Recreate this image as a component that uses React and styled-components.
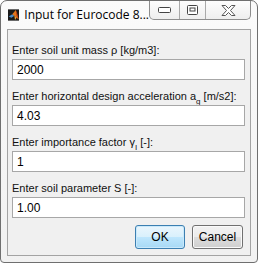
import React from 'react'
import styled, { createGlobalStyle } from 'styled-components'

const Global = createGlobalStyle`
  html, body { margin: 0; padding: 0; background: #ffffff; }
  * { box-sizing: border-box; }
`

const Window = styled.div`
  width: 258px;
  height: 263px;
  border: 1px solid #6f6f6f;
  border-radius: 7px 7px 4px 4px;
  background: linear-gradient(#fbfbfb, #f1f1f1);
  display: flex;
  flex-direction: column;
  overflow: hidden;
`

const TitleBar = styled.div`
  height: 28px;
  display: flex;
  align-items: flex-start;
  padding: 0 6px 0 7px;
`

const Title = styled.div`
  flex: 1;
  display: flex;
  align-items: center;
  gap: 5px;
  height: 27px;
  font-family: 'Open Sans', 'Noto Sans', sans-serif;
  font-size: 12px;
  color: #000;
  white-space: nowrap;
  overflow: hidden;
`

const Caption = styled.div`
  display: flex;
  height: 19px;
  border: 1px solid #8d8d8d;
  border-top: none;
  border-radius: 0 0 5px 5px;
  background: linear-gradient(#fdfdfd, #eeeeee);
  overflow: hidden;
`

const CapButton = styled.div`
  width: ${p => p.$w}px;
  display: flex;
  align-items: center;
  justify-content: center;
  border-left: ${p => (p.$first ? 'none' : '1px solid #a9a9a9')};
`

const Client = styled.div`
  flex: 1;
  margin: 0 6px 6px 6px;
  border: 1px solid #a3a3a3;
  background: #f0f0f0;
  padding: 13px 5px 0 4px;
  display: flex;
  flex-direction: column;
  gap: 9px;
  font-family: 'Liberation Sans', Arial, sans-serif;
  font-size: 11px;
  color: #000;
`

const Field = styled.div`
  display: flex;
  flex-direction: column;
  gap: 2px;
`

const Label = styled.div`
  height: 14px;
  line-height: 14px;
  white-space: nowrap;
  color: #111;
  sub {
    font-size: 8px;
    vertical-align: -4px;
    line-height: 0;
  }
`

const Input = styled.div`
  height: 21px;
  border: 1px solid #a7a7a7;
  background: #ffffff;
  padding: 0 4px;
  display: flex;
  align-items: center;
  font-size: 12px;
`

const Buttons = styled.div`
  display: flex;
  justify-content: flex-end;
  gap: 7px;
  margin-top: -2px;
  padding-right: 2px;
`

const Button = styled.div`
  width: ${p => p.$w}px;
  height: 24px;
  border-radius: 3px;
  border: 1px solid ${p => (p.$primary ? '#3c7fb1' : '#707070')};
  background: ${p =>
    p.$primary
      ? 'linear-gradient(#eaf6fd 0%, #d9f0fc 50%, #bee6fd 51%, #a7d9f5 100%)'
      : 'linear-gradient(#f2f2f2 0%, #ebebeb 50%, #dddddd 51%, #cfcfcf 100%)'};
  box-shadow: inset 0 0 0 1px ${p => (p.$primary ? '#c9e9fb' : '#fafafa')};
  display: flex;
  align-items: center;
  justify-content: center;
  font-size: 12px;
`

function MatlabIcon() {
  return (
    <svg width="16" height="16" viewBox="0 0 16 16">
      <rect width="16" height="16" fill="#1a1a1a" />
      <path d="M1 10 L6 7 L9 9 L5 12 Z" fill="#4a8cc9" />
      <path d="M6 7 L11 1 L15 14 L12 12 L9 9 Z" fill="#e2761c" />
      <path d="M11 1 L13 6 L15 14 L12 9 Z" fill="#c23a12" />
      <path d="M9 9 L12 12 L10 15 Z" fill="#f3a83b" />
    </svg>
  )
}

export default function App() {
  return (
    <>
      <Global />
      <Window>
        <TitleBar>
          <Title>
            <MatlabIcon />
            <span>Input for Eurocode 8...</span>
          </Title>
          <Caption>
            <CapButton $w={29} $first>
              <svg width="13" height="6" viewBox="0 0 13 6">
                <rect x="0.5" y="0.5" width="12" height="5" rx="1" fill="#fff" stroke="#444" />
              </svg>
            </CapButton>
            <CapButton $w={26}>
              <svg width="11" height="10" viewBox="0 0 11 10">
                <rect x="0.5" y="0.5" width="10" height="9" rx="1" fill="#fff" stroke="#444" />
                <rect x="3" y="3" width="5" height="3" fill="none" stroke="#444" />
              </svg>
            </CapButton>
            <CapButton $w={45}>
              <svg width="15" height="11" viewBox="0 0 15 11">
                <path
                  d="M1 0.5 H4.5 L7.5 3.5 L10.5 0.5 H14 L9.5 5.5 L14 10.5 H10.5 L7.5 7.5 L4.5 10.5 H1 L5.5 5.5 Z"
                  fill="#fff"
                  stroke="#555"
                  strokeLinejoin="round"
                />
              </svg>
            </CapButton>
          </Caption>
        </TitleBar>
        <Client>
          <Field>
            <Label>Enter soil unit mass ρ [kg/m3]:</Label>
            <Input>2000</Input>
          </Field>
          <Field>
            <Label>
              Enter horizontal design acceleration a<sub>g</sub> [m/s2]:
            </Label>
            <Input>4.03</Input>
          </Field>
          <Field>
            <Label>
              Enter importance factor γ<sub>I</sub> [-]:
            </Label>
            <Input>1</Input>
          </Field>
          <Field>
            <Label>Enter soil parameter S [-]:</Label>
            <Input>1.00</Input>
          </Field>
          <Buttons>
            <Button $w={50} $primary>OK</Button>
            <Button $w={51}>Cancel</Button>
          </Buttons>
        </Client>
      </Window>
    </>
  )
}
